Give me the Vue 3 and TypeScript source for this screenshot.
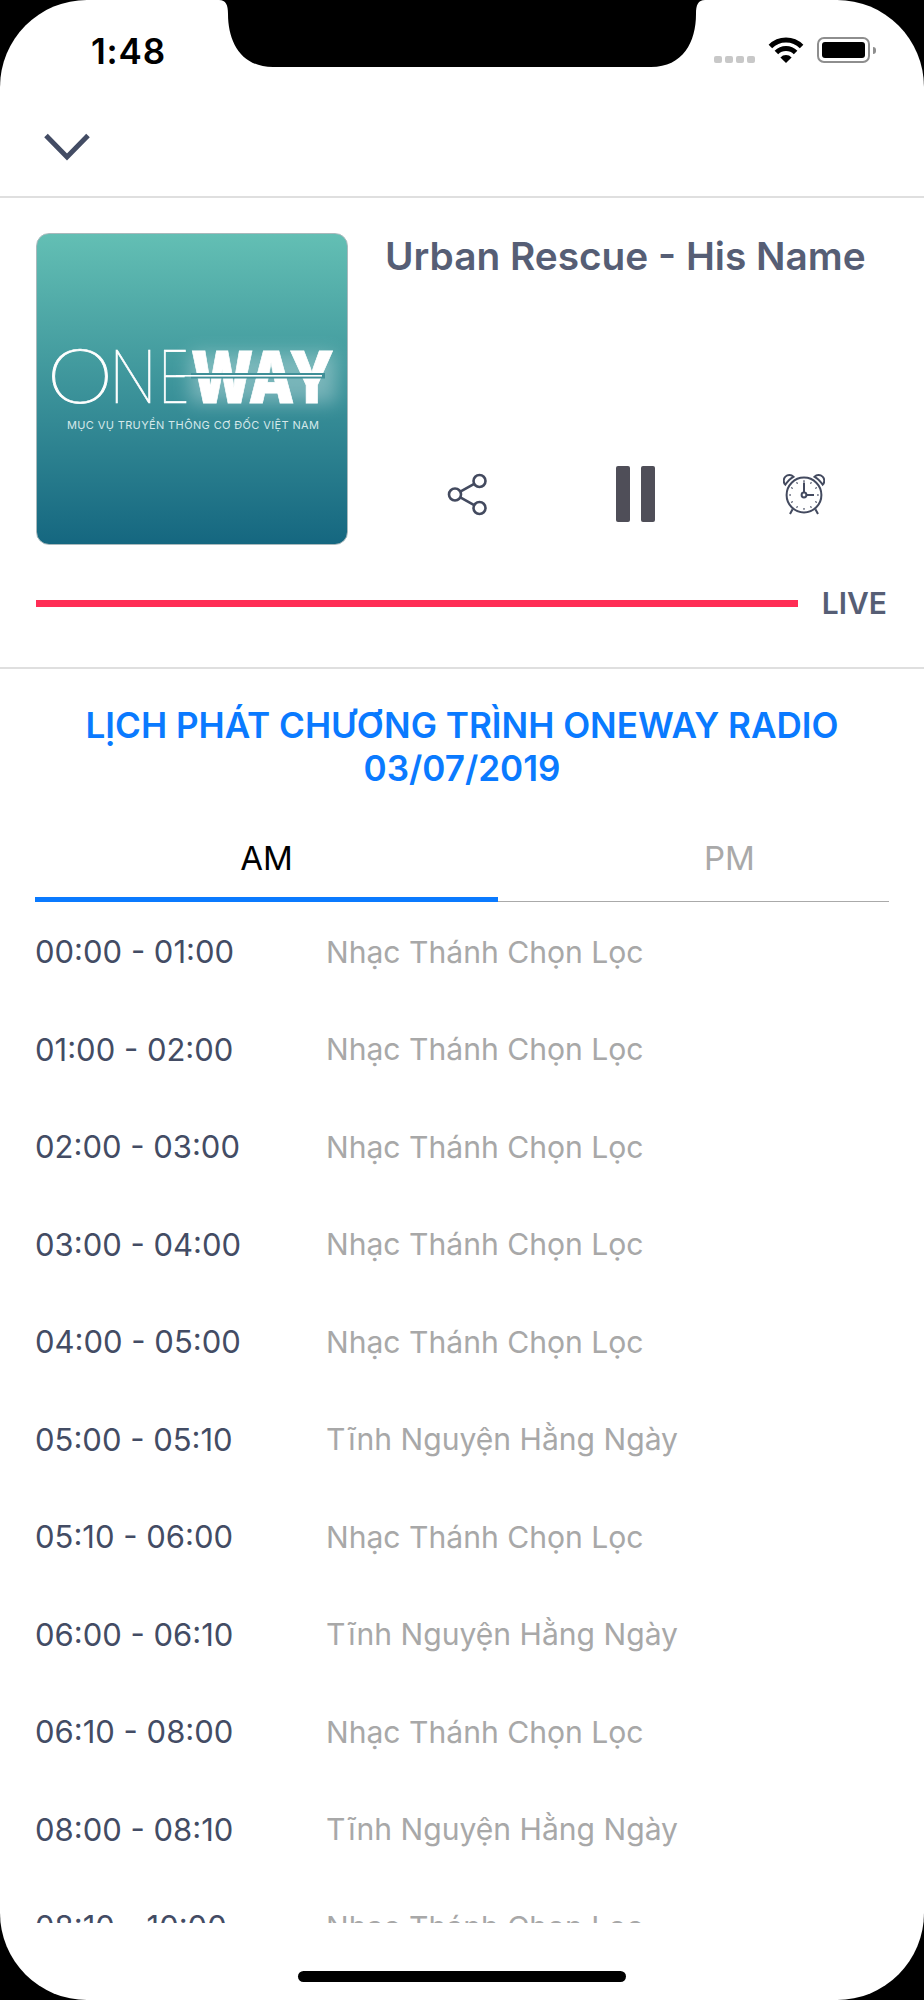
<script setup lang="ts">
const amRows = [
  { time: "00:00 - 01:00", title: "Nhạc Thánh Chọn Lọc" },
  { time: "01:00 - 02:00", title: "Nhạc Thánh Chọn Lọc" },
  { time: "02:00 - 03:00", title: "Nhạc Thánh Chọn Lọc" },
  { time: "03:00 - 04:00", title: "Nhạc Thánh Chọn Lọc" },
  { time: "04:00 - 05:00", title: "Nhạc Thánh Chọn Lọc" },
  { time: "05:00 - 05:10", title: "Tĩnh Nguyện Hằng Ngày" },
  { time: "05:10 - 06:00", title: "Nhạc Thánh Chọn Lọc" },
  { time: "06:00 - 06:10", title: "Tĩnh Nguyện Hằng Ngày" },
  { time: "06:10 - 08:00", title: "Nhạc Thánh Chọn Lọc" },
  { time: "08:00 - 08:10", title: "Tĩnh Nguyện Hằng Ngày" },
  { time: "08:10 - 10:00", title: "Nhạc Thánh Chọn Lọc" },
];

// tick marks on the alarm clock face
const ticks = Array.from({ length: 12 }, (_, i) => i * 30);
</script>

<template>
  <div class="screen">
    <svg class="notch" viewBox="0 0 490 67" aria-hidden="true">
      <path d="M0 0H2C9 0 11 5 11 14C11 42 24 67 56 67H434C466 67 479 42 479 14C479 5 481 0 488 0H490Z" fill="#000" />
    </svg>

    <div class="status">
      <span class="clock-time">1:48</span>
      <div class="status-icons">
        <div class="signal"><i></i><i></i><i></i><i></i></div>
        <svg class="wifi" viewBox="0 0 36 26" aria-hidden="true">
          <path d="M2.4 9.6A22 22 0 0 1 33.6 9.6" fill="none" stroke="#000" stroke-width="5" />
          <path d="M8.4 15.6A13.5 13.5 0 0 1 27.6 15.6" fill="none" stroke="#000" stroke-width="5" />
          <path d="M18 26L12.4 20.4A8 8 0 0 1 23.6 20.4Z" fill="#000" />
        </svg>
        <div class="battery"><span></span></div>
        <div class="battery-cap"></div>
      </div>
    </div>

    <div class="topbar">
      <svg class="chevron" viewBox="0 0 46 28" aria-hidden="true">
        <path d="M2 2.5L23 24L44 2.5" fill="none" stroke="#434c64" stroke-width="5" />
      </svg>
    </div>

    <section class="player">
      <div class="now">
        <div class="cover">
          <svg viewBox="0 0 312 311" class="logo" role="img" aria-label="OneWay">
            <defs>
              <filter id="glow" x="-30%" y="-60%" width="160%" height="220%">
                <feGaussianBlur stdDeviation="9" />
              </filter>
            </defs>
            <rect x="154" y="120" width="146" height="50" fill="#fff" opacity="0.3" filter="url(#glow)" />
            <!-- each thin letter has its own width in the logo -->
            <text x="10" y="170" class="logo-one" textLength="68" lengthAdjust="spacingAndGlyphs">O</text>
            <text x="73" y="170" class="logo-one" textLength="48" lengthAdjust="spacingAndGlyphs">N</text>
            <text x="122" y="170" class="logo-one" textLength="32" lengthAdjust="spacingAndGlyphs">E</text>
            <text x="155" y="170" class="logo-way" textLength="143" lengthAdjust="spacingAndGlyphs">WAY</text>
            <rect x="155" y="140" width="134" height="5.5" fill="#3f8f97" />
            <rect x="140" y="142" width="146" height="1.6" fill="#fff" />
            <text x="31" y="196" class="logo-sub" textLength="252" lengthAdjust="spacing">MỤC VỤ TRUYỀN THÔNG CƠ ĐỐC VIỆT NAM</text>
          </svg>
        </div>
        <div class="info">
          <h1>Urban Rescue - His Name</h1>
          <div class="controls">
            <svg class="share" viewBox="0 0 41 43" aria-hidden="true">
              <g fill="none" stroke="#434a5f" stroke-width="2.6">
                <circle cx="32.5" cy="8" r="6" />
                <circle cx="8" cy="21.5" r="6" />
                <circle cx="32.5" cy="35" r="6" />
                <path d="M13.3 18.6L27.2 10.9M13.3 24.4L27.2 32.1" />
              </g>
            </svg>
            <div class="pause"><i></i><i></i></div>
            <svg class="alarm" viewBox="0 0 42 43" aria-hidden="true">
              <g fill="none" stroke="#434a5f" stroke-width="2">
                <circle cx="21" cy="22" r="17.4" />
                <path d="M2.3 11.6A5.6 5.6 0 0 1 10.4 3.8C8 5 4.6 8.4 2.3 11.6Z" />
                <path d="M39.7 11.6A5.6 5.6 0 0 0 31.6 3.8C34 5 37.4 8.4 39.7 11.6Z" />
                <path d="M9.6 36.2L7 41M32.4 36.2L35 41" />
                <path d="M21 9.5V20M23.4 22H31" />
                <circle cx="21" cy="22" r="2.4" />
              </g>
              <g fill="#434a5f">
                <rect
                  v-for="deg in ticks"
                  :key="deg"
                  x="20.4"
                  y="7.2"
                  width="1.2"
                  height="1.8"
                  :transform="`rotate(${deg} 21 22)`"
                />
              </g>
            </svg>
          </div>
        </div>
      </div>
      <div class="progress">
        <div class="bar"></div>
        <span class="live">LIVE</span>
      </div>
    </section>

    <section class="schedule">
      <h2>LỊCH PHÁT CHƯƠNG TRÌNH ONEWAY RADIO<br />03/07/2019</h2>
      <div class="tabs">
        <div class="tab active">AM</div>
        <div class="tab">PM</div>
      </div>
      <div class="rows">
        <div v-for="row in amRows" :key="row.time" class="row">
          <span class="time">{{ row.time }}</span>
          <span class="title">{{ row.title }}</span>
        </div>
      </div>
    </section>

    <div class="home-area"><div class="home"></div></div>
  </div>
</template>

<style>
html,
body {
  margin: 0;
  background: #000;
}
</style>

<style scoped>
.screen {
  position: relative;
  width: 924px;
  height: 2000px;
  background: #fff;
  border-radius: 87px;
  overflow: hidden;
  display: flex;
  flex-direction: column;
  font-family: Inter, "Noto Sans", "Liberation Sans", sans-serif;
}

.notch {
  position: absolute;
  top: 0;
  left: 217px;
  width: 490px;
  height: 67px;
}

.status {
  height: 67px;
  flex: none;
  display: flex;
  justify-content: space-between;
  padding: 0 48px 0 91px;
}

.clock-time {
  margin-top: 31px;
  height: 40px;
  line-height: 40px;
  font-size: 35px;
  font-weight: 600;
  color: #000;
  letter-spacing: 0.8px;
}

.status-icons {
  display: flex;
  align-items: flex-start;
  padding-top: 37px;
}

.signal {
  display: flex;
  gap: 3px;
  margin-top: 19px;
  margin-right: 13px;
}

.signal i {
  width: 8px;
  height: 7px;
  border-radius: 2px;
  background: #c8c8c8;
}

.wifi {
  width: 36px;
  height: 26px;
  margin-right: 13px;
}

.battery {
  box-sizing: border-box;
  width: 53px;
  height: 26px;
  border: 2px solid #8e8e8e;
  border-radius: 7px;
  padding: 3px;
}

.battery span {
  display: block;
  height: 100%;
  background: #000;
  border-radius: 3px;
}

.battery-cap {
  width: 3px;
  height: 7px;
  margin: 10px 0 0 3px;
  background: #8e8e8e;
  border-radius: 0 3px 3px 0;
}

.topbar {
  height: 131px;
  flex: none;
  box-sizing: border-box;
  padding: 66px 0 0 44px;
  border-bottom: 2px solid #dfdfdf;
}

.chevron {
  display: block;
  width: 46px;
  height: 28px;
}

.player {
  flex: none;
  height: 471px;
  box-sizing: border-box;
  padding: 35px 37px 0 36px;
  border-bottom: 2px solid #dfdfdf;
}

.now {
  display: flex;
  height: 312px;
}

.cover {
  width: 312px;
  height: 312px;
  flex: none;
  box-sizing: border-box;
  border: 1px solid #a9b9bc;
  border-radius: 13px;
  overflow: hidden;
  background: linear-gradient(#63bfb4, #156780);
}

.logo {
  display: block;
  width: 312px;
  height: 311px;
  margin: -1px;
}

.logo-one {
  font-family: Inter, sans-serif;
  font-size: 73px;
  font-weight: 100;
  fill: #fff;
  stroke: #fff;
  stroke-width: 0.7px;
}

.logo-way {
  font-family: Inter, sans-serif;
  font-size: 72px;
  font-weight: 900;
  fill: #fff;
  stroke: #fff;
  stroke-width: 0.8px;
}

.logo-sub {
  font-family: Inter, sans-serif;
  font-size: 11px;
  fill: #d5e8ea;
}

.info {
  flex: 1;
  margin-left: 37px;
  display: flex;
  flex-direction: column;
  justify-content: space-between;
}

h1 {
  margin: 0;
  font-size: 38.8px;
  line-height: 46px;
  font-weight: 600;
  color: #565e75;
  white-space: nowrap;
}

.controls {
  display: flex;
  align-items: center;
  padding: 0 0 23px 62px;
}

.share {
  width: 41px;
  height: 43px;
  margin-right: 128px;
}

.pause {
  display: flex;
  gap: 11px;
  margin-right: 128px;
}

.pause i {
  width: 14px;
  height: 56px;
  border-radius: 2px;
  background: #4f4e58;
}

.alarm {
  width: 42px;
  height: 43px;
}

.progress {
  display: flex;
  align-items: center;
  margin-top: 41px;
}

.bar {
  width: 762px;
  height: 7px;
  background: #ff2d55;
}

.live {
  margin-left: 24px;
  font-size: 30px;
  line-height: 34px;
  font-weight: 600;
  color: #565e75;
}

.schedule {
  flex: none;
  padding: 0 35px;
}

h2 {
  margin: 35px 0 0;
  font-size: 35.1px;
  line-height: 43px;
  font-weight: 600;
  color: #0a7aff;
  text-align: center;
  white-space: nowrap;
}

.tabs {
  display: flex;
  overflow: hidden;
  margin-top: 36px;
  height: 76px;
}

.tab {
  width: 463px;
  flex: none;
  height: 76px;
  box-sizing: border-box;
  padding-top: 12px;
  font-size: 33px;
  line-height: 40px;
  text-align: center;
  color: #a9a9a9;
  border-bottom: 1.5px solid #aaa;
}

.tab.active {
  color: #000;
  border-bottom: 5px solid #0a7aff;
}

.rows {
  height: 1021px;
  overflow: hidden;
  padding-top: 1px;
  box-sizing: border-box;
}

.row {
  height: 97.5px;
  display: flex;
  align-items: center;
  font-size: 30.1px;
}

.time {
  width: 291px;
  flex: none;
  font-size: 31px;
  color: #434c64;
}

.title {
  color: #a8a8a8;
}

.home-area {
  flex: 1;
  position: relative;
}

.home {
  position: absolute;
  left: 298px;
  top: 48px;
  width: 328px;
  height: 11px;
  border-radius: 6px;
  background: #000;
}
</style>
